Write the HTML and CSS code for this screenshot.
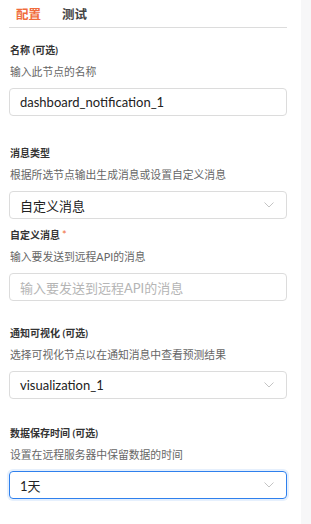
FILE: index.html
```html
<!DOCTYPE html>
<html lang="zh">
<head>
<meta charset="utf-8">
<link rel="stylesheet" href="styles.css">
</head>
<body>
<div class="page">
  <main class="panel">
    <nav class="tabs">
      <span class="tab active">配置</span>
      <span class="tab">测试</span>
    </nav>

    <section class="field f1">
      <div class="label">名称 (可选)</div>
      <div class="desc">输入此节点的名称</div>
      <div class="box">dashboard_notification_1</div>
    </section>

    <section class="field f2">
      <div class="label">消息类型</div>
      <div class="desc">根据所选节点输出生成消息或设置自定义消息</div>
      <div class="box select">自定义消息<svg class="chev" viewBox="0 0 10 6"><path d="M0.5 0.5 L5 5 L9.5 0.5"/></svg></div>
    </section>

    <section class="field f3">
      <div class="label">自定义消息<span class="req">*</span></div>
      <div class="desc">输入要发送到远程API的消息</div>
      <div class="box placeholder">输入要发送到远程API的消息</div>
    </section>

    <section class="field f4">
      <div class="label">通知可视化 (可选)</div>
      <div class="desc">选择可视化节点以在通知消息中查看预测结果</div>
      <div class="box select">visualization_1<svg class="chev" viewBox="0 0 10 6"><path d="M0.5 0.5 L5 5 L9.5 0.5"/></svg></div>
    </section>

    <section class="field f5">
      <div class="label">数据保存时间 (可选)</div>
      <div class="desc">设置在远程服务器中保留数据的时间</div>
      <div class="box select focus">1天<svg class="chev" viewBox="0 0 10 6"><path d="M0.5 0.5 L5 5 L9.5 0.5"/></svg></div>
    </section>
  </main>
  <aside class="strip"></aside>
</div>
</body>
</html>
```

FILE: styles.css
```css
html, body {
  margin: 0;
  padding: 0;
  background: #ffffff;
}
body {
  font-family: Lato, "Noto Sans CJK SC", sans-serif;
  color: #333;
}
.page {
  display: flex;
  height: 524px;
  overflow: hidden;
}
.panel {
  width: 278px;
  margin-left: 9px;
  display: flex;
  flex-direction: column;
}
.strip {
  margin-left: auto;
  width: 10px;
  background: #f7f7f8;
}
.tabs {
  display: flex;
  gap: 21px;
  padding: 0 0 0 7px;
  height: 28px;
  align-items: center;
  border-bottom: 1px solid #dcdcdc;
  box-sizing: border-box;
}
.tab {
  font-size: 12.5px;
  font-weight: 700;
  color: #444;
  line-height: 16px;
  margin-top: 3px;
}
.tab.active {
  color: #f06c3c;
}
.field {
  display: flex;
  flex-direction: column;
}
.label {
  font-size: 10px;
  font-weight: 700;
  line-height: 14px;
  color: #333;
  padding-left: 1px;
}
.req {
  color: #f06c3c;
  font-weight: 400;
  font-size: 11px;
  margin-left: 2px;
}
.desc {
  font-size: 10.8px;
  line-height: 14px;
  color: #666;
  margin-top: 8px;
  padding-left: 1px;
}
.box {
  margin-top: 9px;
  height: 28px;
  box-sizing: border-box;
  border: 1px solid #dcdcdc;
  border-radius: 4px;
  padding: 0 10px;
  display: flex;
  align-items: center;
  font-size: 13px;
  color: #222;
}
.placeholder {
  color: #b5b5b5;
}
.select {
  justify-content: space-between;
}
.chev {
  width: 10px;
  height: 6px;
  fill: none;
  stroke: #bdbdbd;
  stroke-width: 0.9;
  margin-right: 2px;
}
.focus {
  border-color: #2f80ed;
  box-shadow: 0 0 0 2px #e6f0fd;
}
.f1 { margin-top: 15px; }
.f2 { margin-top: 30px; }
.f3 { margin-top: 9px; }
.f4 { margin-top: 25px; }
.f5 { margin-top: 27px; }
```
